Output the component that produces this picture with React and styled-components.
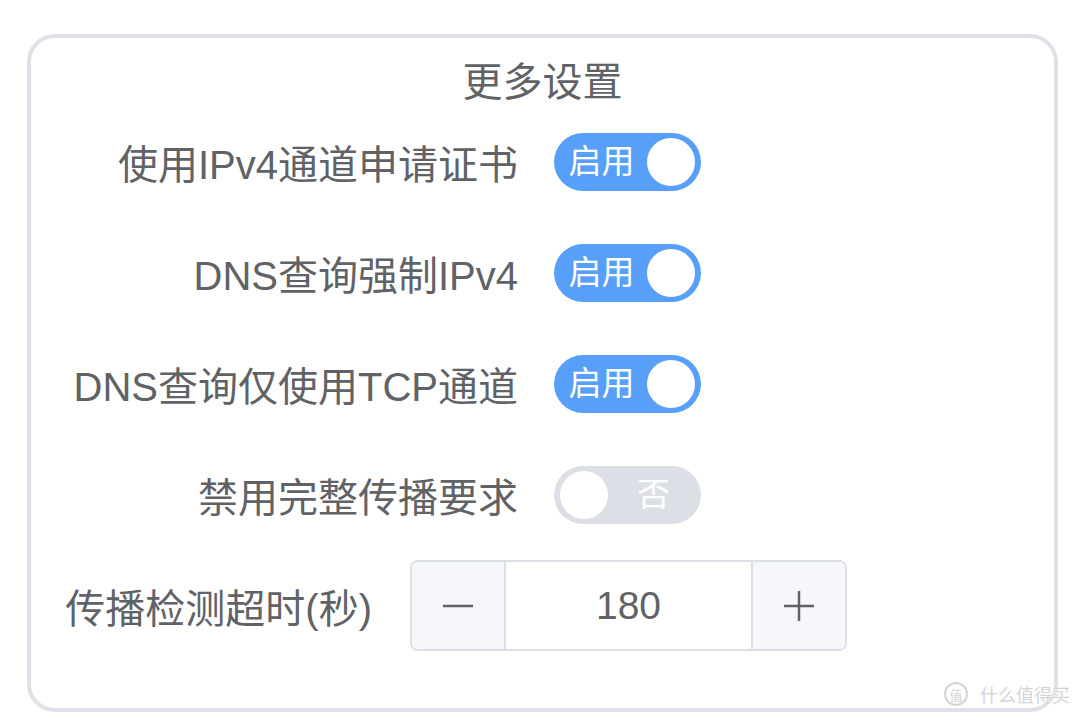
import React, { useState } from "react";
import styled, { createGlobalStyle } from "styled-components";

const GlobalStyle = createGlobalStyle`
  html, body {
    margin: 0;
    padding: 0;
    background: #fff;
    font-family: "Liberation Sans", "Noto Sans CJK SC", sans-serif;
  }
`;

const Page = styled.div`
  position: relative;
  width: 1080px;
  height: 721px;
  padding: 34px 0 0 27px;
  box-sizing: border-box;
  overflow: hidden;
`;

const Card = styled.div`
  width: 1031px;
  height: 678px;
  box-sizing: border-box;
  border: 4px solid #dee1e7;
  border-radius: 28px;
  padding: 0 20px;
`;

const Title = styled.div`
  margin-top: 20px;
  height: 48px;
  line-height: 48px;
  text-align: center;
  font-size: 40px;
  color: #606266;
`;

const Row = styled.div`
  display: flex;
  align-items: center;
  height: 111px;
`;

const Label = styled.div`
  width: ${(p) => p.width}px;
  margin-right: ${(p) => p.gap}px;
  text-align: right;
  font-size: 40px;
  color: #606266;
  white-space: nowrap;
`;

const SwitchTrack = styled.button`
  position: relative;
  width: 147px;
  height: 58px;
  border: none;
  border-radius: 29px;
  padding: 0;
  cursor: pointer;
  background: ${(p) => (p.on ? "#579ff8" : "#dcdfe6")};
  display: flex;
  align-items: center;
  flex-direction: ${(p) => (p.on ? "row" : "row-reverse")};
  font-family: inherit;
`;

const SwitchText = styled.span`
  flex: 1;
  text-align: center;
  color: #fff;
  font-size: 33px;
  line-height: 58px;
  padding: ${(p) => (p.on ? "0 0 0 8px" : "0 8px 0 0")};
`;

const Knob = styled.span`
  width: 48px;
  height: 48px;
  border-radius: 50%;
  background: #fff;
  margin: 0 6px;
  flex-shrink: 0;
`;

const Stepper = styled.div`
  display: flex;
  width: 437px;
  height: 91px;
  box-sizing: border-box;
  border: 2px solid #dcdfe6;
  border-radius: 8px;
  overflow: hidden;
`;

const StepBtn = styled.button`
  width: 94px;
  border: none;
  background: #f5f7fa;
  display: flex;
  align-items: center;
  justify-content: center;
  padding: 0;
  cursor: pointer;
  border-${(p) => (p.side === "left" ? "right" : "left")}: 2px solid #dcdfe6;
`;

const StepValue = styled.div`
  flex: 1;
  display: flex;
  align-items: center;
  justify-content: center;
  font-size: 39px;
  color: #606266;
`;

const Watermark = styled.div`
  position: absolute;
  right: 10px;
  bottom: 14px;
  display: flex;
  align-items: center;
  gap: 12px;
  color: #d4d4d8;
  font-size: 18px;
  text-shadow: 0 0 2px #fff;
`;

const WmBadge = styled.span`
  width: 20px;
  height: 20px;
  border-radius: 50%;
  border: 2px solid #d4d4d8;
  font-size: 13px;
  display: flex;
  align-items: center;
  justify-content: center;
`;

const Switch = ({ on, onText, offText, onClick }) => (
  <SwitchTrack on={on} onClick={onClick}>
    <SwitchText on={on}>{on ? onText : offText}</SwitchText>
    <Knob />
  </SwitchTrack>
);

const App = () => {
  const [opts, setOpts] = useState([
    { label: "使用IPv4通道申请证书", on: true },
    { label: "DNS查询强制IPv4", on: true },
    { label: "DNS查询仅使用TCP通道", on: true },
    { label: "禁用完整传播要求", on: false },
  ]);
  const [timeout, setTimeoutVal] = useState(180);

  const toggle = (i) => {
    setOpts(opts.map((o, j) => (j === i ? { ...o, on: !o.on } : o)));
  };

  return (
    <Page>
      <GlobalStyle />
      <Card>
        <Title>更多设置</Title>
        {opts.map((o, i) => (
          <Row key={o.label}>
            <Label width={467} gap={36}>
              {o.label}
            </Label>
            <Switch on={o.on} onText="启用" offText="否" onClick={() => toggle(i)} />
          </Row>
        ))}
        <Row>
          <Label width={321} gap={38}>
            传播检测超时(秒)
          </Label>
          <Stepper>
            <StepBtn side="left" onClick={() => setTimeoutVal(timeout - 1)}>
              <svg width="32" height="32" viewBox="0 0 32 32">
                <line x1="1" y1="16" x2="31" y2="16" stroke="#606266" strokeWidth="2.5" />
              </svg>
            </StepBtn>
            <StepValue>{timeout}</StepValue>
            <StepBtn side="right" onClick={() => setTimeoutVal(timeout + 1)}>
              <svg width="32" height="32" viewBox="0 0 32 32">
                <line x1="1" y1="16" x2="31" y2="16" stroke="#606266" strokeWidth="2.5" />
                <line x1="16" y1="1" x2="16" y2="31" stroke="#606266" strokeWidth="2.5" />
              </svg>
            </StepBtn>
          </Stepper>
        </Row>
      </Card>
      <Watermark>
        <WmBadge>值</WmBadge>
        <span>什么值得买</span>
      </Watermark>
    </Page>
  );
};

export default App;
